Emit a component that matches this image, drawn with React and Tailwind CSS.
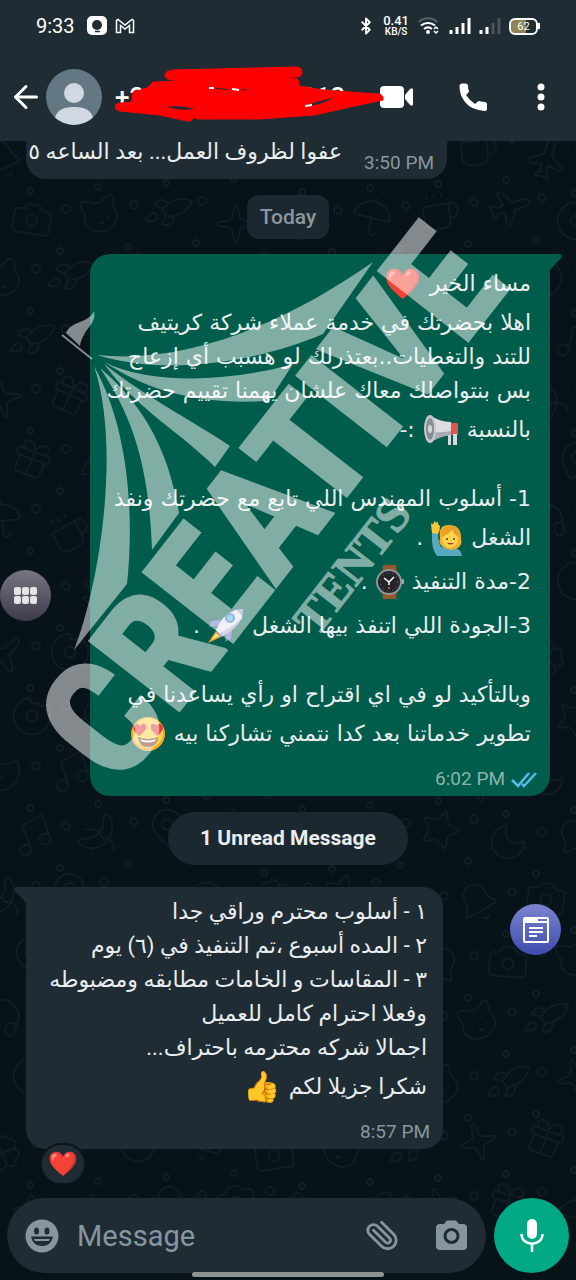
import React from 'react';
import {
  ArrowLeft,
  Banana,
  Bell,
  Bluetooth,
  Camera,
  Cat,
  Clover,
  Clock,
  Coffee,
  Donut,
  Gift,
  Headphones,
  Leaf,
  MapPin,
  Moon,
  Music,
  Paperclip,
  Plane,
  Rocket,
  Sparkle,
  Star,
  Umbrella,
} from 'lucide-react';

const DOODLES = [Star, Donut, Camera, Banana, Sparkle, Clock, Coffee, Moon, Leaf, Cat, MapPin, Gift, Clover, Plane, Bell, Music, Rocket, Headphones, Umbrella];

const Megaphone = () => (
  <svg width="36" height="32" viewBox="0 0 36 32">
    <path d="M24 9H34Q35 9 35 11V19Q35 21 34 21H24Z" fill="#e5554f" />
    <path d="M25 20H28V31H25ZM30 20H34V31H30Z" fill="#d9dadd" />
    <path d="M7 1Q16 8 28 8V21Q16 22 7 29Z" fill="#dcdde0" />
    <path d="M8 18Q18 19 28 17V21Q16 22 7 29Z" fill="#a9abb0" />
    <ellipse cx="7" cy="15" rx="6" ry="14" fill="#c5c7cc" />
    <ellipse cx="7" cy="15" rx="4" ry="11" fill="#888c94" />
    <ellipse cx="7" cy="15" rx="2" ry="4" fill="#d5d7da" />
  </svg>
);

const RaisedHand = () => (
  <svg width="32" height="35" viewBox="0 0 32 35">
    <path d="M1 12H7Q7 20 10 26L24 27Q30 28 31 35H6Q0 28 1 12Z" fill="#58a9bd" />
    <path d="M1 12L0 3Q1 1 2 4L3 1Q4 -1 5 2Q7 -1 7 3L9 5Q9 10 7 13Z" fill="#fcc736" />
    <path d="M18 4Q7 4 9 17Q7 23 12 26Q18 30 25 28Q32 25 30 17Q30 4 18 4Z" fill="#f2b02b" />
    <ellipse cx="19" cy="17" rx="8" ry="10" fill="#fdd44c" />
    <path d="M10 16Q9 5 19 5Q29 5 28 16Q23 14 21 9Q17 14 10 16Z" fill="#e9a125" />
    <circle cx="16" cy="18" r="1" fill="#59391b" />
    <circle cx="23" cy="18" r="1" fill="#59391b" />
    <path d="M16 22Q19 25 23 22Z" fill="#b23b30" />
  </svg>
);

const Watch = () => (
  <svg width="28" height="36" viewBox="0 0 28 36">
    <path d="M7 1H20L21 9H6ZM6 27H21L20 35H7Z" fill="#96572c" />
    <rect x="25" y="15" width="3" height="5" rx="1" fill="#a9adb3" />
    <circle cx="13" cy="18" r="13" fill="#8f949b" />
    <circle cx="13" cy="18" r="11" fill="#23252b" />
    <circle cx="13" cy="18" r="9" fill="none" stroke="#6c7078" strokeDasharray="1 4" />
    <path d="M8 14L13 18L18 13M13 18V21" fill="none" stroke="#fff" strokeWidth="1.500" />
    <circle cx="13" cy="24" r="1" fill="#d87746" />
  </svg>
);

const RocketShip = () => (
  <svg width="36" height="36" viewBox="0 0 36 36">
    <path d="M13 12L3 13L1 19L10 18ZM24 22L23 31L17 34L18 25Z" fill="#6b73c9" />
    <path d="M8 23L0 35L13 29Z" fill="#f5a03c" />
    <path d="M8 25L3 32L11 28Z" fill="#ffe27a" />
    <path d="M8 22Q14 7 27 2L35 1L34 10Q27 22 13 29Z" fill="#dfe2ee" />
    <path d="M34 10Q27 22 13 29L10 26Q25 19 34 10Z" fill="#a7a9cf" />
    <path d="M28 2L35 1L34 9Q32 4 28 2Z" fill="#8f93c6" />
    <circle cx="22" cy="10" r="5" fill="#2d6cb5" />
    <circle cx="22" cy="10" r="3" fill="#4fb3ea" />
  </svg>
);

const HeartEyes = () => (
  <svg width="36" height="36" viewBox="0 0 36 36">
    <circle cx="18" cy="18" r="17" fill="#f9a928" />
    <circle cx="18" cy="17" r="15" fill="#fdd44c" />
    <path d="M9 20Q1 13 4 9Q8 6 10 10Q13 6 16 9Q18 14 9 20Z" fill="#e63c3d" />
    <path d="M27 20Q19 13 21 9Q24 6 26 10Q29 6 32 9Q35 14 27 20Z" fill="#e63c3d" />
    <path d="M8 21Q18 25 28 21Q27 31 18 31T8 21Z" fill="#7b3a1d" />
    <path d="M10 23Q18 26 26 23L25 25Q18 28 11 25Z" fill="#fff" />
  </svg>
);

const SENT_LINES = [
  { text: 'مساء الخير', emoji: '❤️' },
  { text: 'اهلا بحضرتك في خدمة عملاء شركة كريتيف' },
  { text: 'للتند والتغطيات..بعتذرلك لو هسبب أي إزعاج' },
  { text: 'بس بنتواصلك معاك علشان يهمنا تقييم حضرتك' },
  { text: 'بالنسبة', emoji: <Megaphone />, end: ':-' },
  { text: '' },
  { text: '1- أسلوب المهندس اللي تابع مع حضرتك ونفذ' },
  { text: 'الشغل', emoji: <RaisedHand />, end: '.' },
  { text: '2-مدة التنفيذ', emoji: <Watch />, end: '.' },
  { text: '3-الجودة اللي اتنفذ بيها الشغل', emoji: <RocketShip />, end: '.' },
  { text: '' },
  { text: 'وبالتأكيد لو في اي اقتراح او رأي يساعدنا في' },
  { text: 'تطوير خدماتنا بعد كدا نتمني تشاركنا بيه', emoji: <HeartEyes /> },
];

const REPLY_LINES = [
  { text: '١ - أسلوب محترم وراقي جدا' },
  { text: '٢ - المده أسبوع ،تم التنفيذ في (٦) يوم' },
  { text: '٣ - المقاسات و الخامات مطابقه ومضبوطه' },
  { text: 'وفعلا احترام كامل للعميل' },
  { text: 'اجمالا شركه محترمه باحتراف...' },
  { text: 'شكرا جزيلا لكم', emoji: '👍' },
];

const Line = ({ text, emoji, end }) => {
  if (!text) return <div className="h-[30px]" />;
  if (!emoji) return <p className="h-[34px] leading-[34px] whitespace-nowrap">{text}</p>;
  return (
    <p className="flex h-[44px] items-center gap-2 leading-[34px] whitespace-nowrap">
      <span>{text}</span>
      <span className="font-['Noto_Color_Emoji',sans-serif] text-[30px]">{emoji}</span>
      {end && <span>{end}</span>}
    </p>
  );
};

const Wallpaper = () => {
  const items = [];
  for (let row = 0; row < 20; row++) {
    for (let col = 0; col < 9; col++) {
      const n = row * 9 + col;
      const Icon = DOODLES[(n * 7 + row) % DOODLES.length];
      const x = col * 68 + (row % 2) * 30 - 20;
      const y = row * 62 + ((n * 13) % 17);
      items.push(
        <g key={n}>
          <g transform={`rotate(${((n * 37) % 60) - 30} ${x + 22} ${y + 22})`}>
            <Icon x={x} y={y} width={44} height={44} strokeWidth={1} />
          </g>
          <circle cx={x + 56} cy={y + 12} r="4" />
          <circle cx={x + 50} cy={y + 54} r="3" />
        </g>
      );
    }
  }
  return (
    <svg aria-hidden="true" className="absolute inset-0 h-full w-full text-[#121e25]" fill="none" stroke="currentColor" strokeWidth="2">
      {items}
    </svg>
  );
};

const Watermark = () => (
  <svg aria-hidden="true" className="pointer-events-none absolute top-0 left-0 z-10 h-[820px] w-[576px]" viewBox="0 0 576 820" fill="#fff" opacity="0.5">
    <path d="M66 333C72 320 88 324 94 311C97 325 83 328 80 346Z" />
    <path d="M62 335L92 359" stroke="#fff" strokeWidth="2" />
    <path d="M97 355C190 365 290 320 373 262L323 334C250 365 160 375 97 355Z" />
    <path d="M104 362C150 385 230 382 293 364L269 401C200 405 150 392 104 362Z" />
    <path d="M104 364C150 400 200 425 230 446L215 467C180 432 138 410 104 364Z" />
    <path d="M100 368C150 410 170 460 179 513L152 550C149 470 135 420 100 368Z" />
    <path d="M94 366C130 430 134 520 127 584L74 650C98 590 122 450 94 366Z" />
    <g transform="translate(118 788) rotate(-52)" fontWeight="700" stroke="#fff">
      <text fontSize="158" strokeWidth="4" fontFamily="Roboto Condensed, Open Sans Condensed, sans-serif">CREATIVE</text>
      <text x="240" y="64" fontSize="48" strokeWidth="1" fontFamily="Liberation Serif, serif">TENTS</text>
    </g>
  </svg>
);

const StatusBar = () => (
  <div className="flex h-[52px] items-center justify-between pr-9 pl-9">
    <div className="flex items-center gap-3">
      <span className="text-xl leading-6">9:33</span>
      <svg width="20" height="20" viewBox="0 0 20 20">
        <rect width="20" height="19" rx="5" fill="#fff" />
        <circle cx="10" cy="9" r="5" fill="#1f2c34" />
        <path d="M8 15.500h5" stroke="#1f2c34" strokeWidth="1.500" />
      </svg>
      <svg className="-ml-1" width="20" height="16" viewBox="0 0 20 16" fill="none" stroke="#fff" strokeWidth="1.500">
        <path d="M1.500 14.500V2.500L3 1.500L10 7L17 1.500L18.500 2.500V14.500H14.500V7.500L10 11L5.500 7.500V14.500Z" />
      </svg>
    </div>
    <div className="flex items-center gap-2">
      <Bluetooth size={18} strokeWidth={2.500} />
      <div className="flex flex-col items-center font-medium">
        <span className="text-[13px] leading-3">0.41</span>
        <span className="text-[10px] leading-[10px]">KB/S</span>
      </div>
      <svg width="24" height="18" viewBox="0 0 24 18" fill="none" stroke="#fff" strokeWidth="2">
        <path d="M2 5C7 0 15 0 20 5" stroke="#56616a" />
        <path d="M4 8.500C8 5 14 5 18 8.500M7 12C9.500 10 12.500 10 15 12" />
        <circle cx="11" cy="15" r="1" fill="#fff" />
        <path d="M17 12L19 10L21 12M17 14L19 16L21 14" strokeWidth="1.500" />
      </svg>
      <svg width="22" height="18" viewBox="0 0 22 18" strokeWidth="3">
        <path d="M2 17V13M8 17V10M14 17V6M20 17V1" stroke="#fff" />
      </svg>
      <svg width="22" height="18" viewBox="0 0 22 18" strokeWidth="3">
        <path d="M2 17V13M8 17V10" stroke="#fff" />
        <path d="M14 17V6M20 17V1" stroke="#4a555c" />
      </svg>
      <div className="flex items-center">
        <div className="h-[17px] w-[29px] rounded-md border-2 border-white bg-linear-to-r from-[#8f8455] from-60% to-transparent to-60% text-center text-[11px] leading-[13px]">62</div>
        <div className="h-1.5 w-0.5 bg-white" />
      </div>
    </div>
  </div>
);

const Toolbar = () => (
  <div className="flex h-[89px] items-center pr-[27px] pl-2">
    <button aria-label="Back" className="mr-0.5">
      <ArrowLeft size={36} strokeWidth={2} />
    </button>
    <svg className="shrink-0" width="56" height="56" viewBox="0 0 56 56">
      <clipPath id="avatar">
        <circle cx="28" cy="28" r="28" />
      </clipPath>
      <g clipPath="url(#avatar)">
        <rect width="56" height="56" fill="#647884" />
        <circle cx="28" cy="24" r="10" fill="#d0d9e1" />
        <path d="M8 56C8 42 16 38 28 38S48 42 48 56Z" fill="#d0d9e1" />
      </g>
    </svg>
    <div className="relative ml-[13px] flex w-[230px] justify-between text-[26px] leading-8 font-medium">
      <span>+2</span>
      <span>212</span>
      <svg aria-hidden="true" className="absolute -top-4 left-0 h-[60px] w-[270px]" viewBox="0 0 270 60" fill="#f00" stroke="#f00" strokeLinejoin="round">
        <path d="M58 5L182 2Q187 3 187 7Q187 12 182 12L168 13L182 14Q185 16 184 21L208 25L248 28L265 29Q269 31 268 35L235 42L200 50Q170 52 145 54H83Q77 53 77 49Q80 57 72 56L45 50L5 46Q0 45 0 41Q1 38 6 38L17 37L18 27L32 23L38 17L73 16L56 15Q50 14 50 10Q50 6 58 5Z" />
        <path d="M51 42Q66 40 80 44Q66 46 51 42Z" fill="#1f2c34" stroke="none" />
        <path d="M190 41Q202 36 218 33Q207 40 190 41Z" fill="#1f2c34" stroke="none" />
        <path d="M94 23H99M117 24L124 25M190 41L197 40" stroke="#fff" strokeWidth="2" />
        <path d="M101 23.500L113 24.500M126 25L132 24.500" stroke="#1f2c34" />
      </svg>
    </div>
    <div className="ml-auto flex items-center gap-[46px]">
      <button aria-label="Video call">
        <svg width="33" height="22" viewBox="0 0 33 22" fill="#fff">
          <rect width="24" height="22" rx="4" />
          <path d="M25 9L30 3Q33 1 33 4V18Q33 21 30 19L25 13Z" />
        </svg>
      </button>
      <button aria-label="Call">
        <svg width="28" height="28" viewBox="0 0 28 28" fill="#fff">
          <path d="M3 .5H7Q9 .5 9 3Q9 6 10 8Q10 9 7 12Q11 18 16 21Q19 18 20 18Q23 19 26 19Q28 19.500 28 21V26Q28 28 26 28Q12 27 6 19Q.5 12 .5 3Q.5 .5 3 .5Z" />
        </svg>
      </button>
      <button aria-label="More" className="flex w-4 justify-center">
        <svg width="8" height="28" viewBox="0 0 8 28" fill="#fff">
          <circle cx="4" cy="4" r="3.500" />
          <circle cx="4" cy="14" r="3.500" />
          <circle cx="4" cy="24" r="3.500" />
        </svg>
      </button>
    </div>
  </div>
);

const Composer = () => (
  <footer className="relative flex items-center gap-2 px-[7px] pb-[7px]">
    <div className="flex h-[75px] min-w-0 flex-1 items-center rounded-full bg-[#1f2c34] px-[18px]">
      <button aria-label="Emoji">
        <svg width="34" height="34" viewBox="0 0 34 34">
          <circle cx="17" cy="17" r="16.500" fill="#8696a0" />
          <ellipse cx="11.500" cy="12" rx="2.500" ry="3.500" fill="#1f2c34" />
          <ellipse cx="22" cy="12" rx="2.500" ry="3.500" fill="#1f2c34" />
          <path d="M6 17.500H28Q26 27 17 27T6 17.500Z" fill="#1f2c34" />
          <path d="M9 20H25L24 22H10Z" fill="#8696a0" />
        </svg>
      </button>
      <input
        type="text"
        aria-label="Message"
        placeholder="Message"
        className="ml-[18px] min-w-0 flex-1 bg-transparent text-[29px] leading-9 outline-none placeholder:text-[#8696a0]"
      />
      <button aria-label="Attach" className="mr-9 text-[#8696a0]">
        <Paperclip size={34} strokeWidth={2} className="-rotate-90" />
      </button>
      <button aria-label="Camera">
        <svg width="33" height="31" viewBox="0 0 33 31">
          <path d="M5 4H9L12 0.500H21L24 4H28Q32 4 32 8V26Q32 30 28 30H5Q1 30 1 26V8Q1 4 5 4Z" fill="#8696a0" />
          <circle cx="16.500" cy="16" r="6.500" fill="none" stroke="#1f2c34" strokeWidth="3" />
        </svg>
      </button>
    </div>
    <button aria-label="Voice message" className="flex size-[75px] items-center justify-center rounded-full bg-[#00a884]">
      <svg width="24" height="33" viewBox="0 0 24 33" fill="none" stroke="#fff" strokeWidth="2.500">
        <rect x="7" y="0" width="10" height="20" rx="5" fill="#fff" stroke="none" />
        <path d="M1.500 15C1.500 28 22.500 28 22.500 15M12 25V33" />
      </svg>
    </button>
    <div className="absolute bottom-[3px] left-1/3 h-[5px] w-1/3 rounded-full bg-[#8f9293]" />
  </footer>
);

const App = () => (
  <div className="relative flex min-h-screen flex-col overflow-hidden bg-[#071219] font-['Roboto','DejaVu_Sans',sans-serif] text-[#e9edef]">
    <Wallpaper />
    <header className="relative bg-[#1f2c34] text-white">
      <StatusBar />
      <Toolbar />
    </header>

    <main className="relative flex flex-1 flex-col items-start text-[22px]">
      <div className="ml-[26px] flex h-[38px] w-[421px] rounded-b-[20px] bg-[#1f2c34] pr-[13px] pl-2">
        <p dir="rtl" className="min-w-0 flex-1 leading-[22px] whitespace-nowrap">عفوا لظروف العمل... بعد الساعه ٥</p>
        <time className="ml-[22px] shrink-0 pt-2 text-[19px] leading-7 whitespace-nowrap text-[#8696a0]">3:50 PM</time>
      </div>

      <div className="mt-4 self-center rounded-xl bg-[#1c2830] px-[13px] text-[21px] leading-[44px] font-medium text-[#8b979f]">Today</div>

      <div className="relative mt-[15px] mr-[26px] w-[460px] self-end rounded-[20px] rounded-tr-none bg-[#005c4b] pt-2">
        <svg className="absolute top-0 -right-3" width="12" height="16" viewBox="0 0 12 16">
          <path d="M0 0H10Q13 1 11 4L0 16Z" fill="#005c4b" />
        </svg>
        <div dir="rtl" className="pr-[19px] font-['DejaVu_Sans',sans-serif]">
          {SENT_LINES.map((line, i) => (
            <Line key={i} {...line} />
          ))}
        </div>
        <div className="flex h-10 items-center justify-end gap-1.5 pt-1.5 pr-[13px] text-[19px] text-[#8cb5ac]">
          <time>6:02 PM</time>
          <svg width="26" height="17" viewBox="0 0 26 17" fill="none" stroke="#53bdeb" strokeWidth="2.500">
            <path d="M1 9L7 15L18 2M11 13L13 15L25 2" />
          </svg>
        </div>
      </div>

      <div className="mt-4 self-center rounded-full bg-[#1c2830] px-8 text-[21px] leading-[53px] font-bold">1 Unread Message</div>

      <div className="relative mt-[22px] ml-[26px] w-[417px] rounded-[20px] rounded-tl-none bg-[#1f2c34] pt-2">
        <svg className="absolute top-0 -left-3" width="12" height="16" viewBox="0 0 12 16">
          <path d="M12 0H2Q-1 1 1 4L12 16Z" fill="#1f2c34" />
        </svg>
        <div dir="rtl" className="pr-4">
          {REPLY_LINES.map((line, i) => (
            <Line key={i} {...line} />
          ))}
        </div>
        <div className="flex h-10 items-center justify-end pt-1.5 pr-[13px] text-[19px] text-[#8696a0]">
          <time>8:57 PM</time>
        </div>
        <div className="absolute -bottom-9 left-3.5 flex h-[42px] w-[46px] items-center justify-center rounded-full border-2 border-[#0b161d] bg-[#1f2c34] text-2xl">❤️</div>
      </div>
    </main>

    <Composer />
    <Watermark />

    <button aria-label="Apps" className="absolute top-[570px] left-0 z-20 flex size-[51px] items-center justify-center rounded-full bg-linear-to-b from-[#777581] to-[#3e3c4b]">
      <span className="grid grid-cols-3 gap-px">
        {[0, 1, 2, 3, 4, 5].map((n) => (
          <span key={n} className="h-2 w-[7px] rounded-xs bg-[#e4e3e6]" />
        ))}
      </span>
    </button>
    <button aria-label="Notes" className="absolute top-[904px] right-[15px] z-20 flex size-[51px] items-center justify-center rounded-full bg-linear-to-b from-[#7d85cf] to-[#3d4bab]">
      <svg width="26" height="26" viewBox="0 0 26 26" fill="none" stroke="#fff" strokeWidth="2">
        <rect x="1" y="1" width="24" height="24" rx="1" />
        <path d="M1 3H15M1 5H25M6 11H20M6 15H20M6 19H14" />
      </svg>
    </button>
  </div>
);

export default App;
